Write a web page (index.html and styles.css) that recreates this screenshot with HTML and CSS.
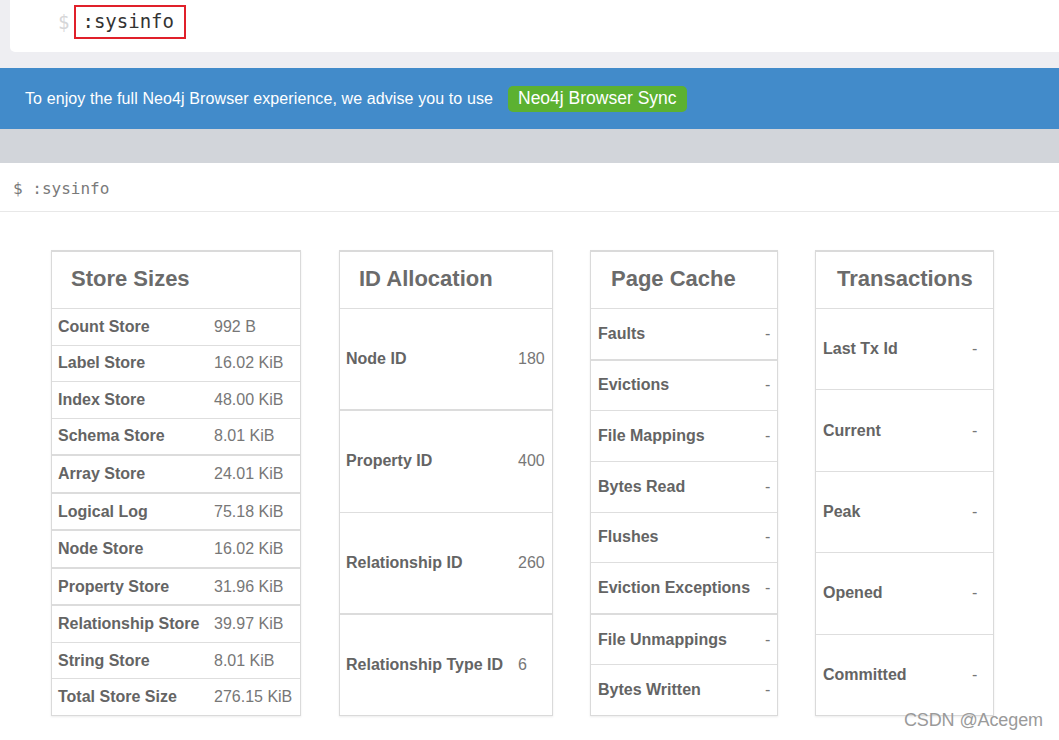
FILE: index.html
```html
<!DOCTYPE html>
<html>
<head>
<meta charset="utf-8">
<link rel="stylesheet" href="styles.css">
</head>
<body>
<div class="top">
  <div class="editor">
    <span class="dollar">$</span>
    <span class="cmd">:sysinfo</span>
  </div>
</div>
<div class="banner">
  <span class="banner-text">To enjoy the full Neo4j Browser experience, we advise you to use</span>
  <span class="sync-btn">Neo4j Browser Sync</span>
</div>
<div class="strip"></div>
<div class="frame-title">$ :sysinfo</div>
<div class="cards">
  <div class="card c1">
    <div class="card-head">Store Sizes</div>
    <div class="rows">
      <div class="row"><span class="lbl">Count Store</span><span class="val">992 B</span></div>
      <div class="row"><span class="lbl">Label Store</span><span class="val">16.02 KiB</span></div>
      <div class="row"><span class="lbl">Index Store</span><span class="val">48.00 KiB</span></div>
      <div class="row"><span class="lbl">Schema Store</span><span class="val">8.01 KiB</span></div>
      <div class="row thick"><span class="lbl">Array Store</span><span class="val">24.01 KiB</span></div>
      <div class="row thick"><span class="lbl">Logical Log</span><span class="val">75.18 KiB</span></div>
      <div class="row thick"><span class="lbl">Node Store</span><span class="val">16.02 KiB</span></div>
      <div class="row thick"><span class="lbl">Property Store</span><span class="val">31.96 KiB</span></div>
      <div class="row thick"><span class="lbl">Relationship Store</span><span class="val">39.97 KiB</span></div>
      <div class="row"><span class="lbl">String Store</span><span class="val">8.01 KiB</span></div>
      <div class="row"><span class="lbl">Total Store Size</span><span class="val">276.15 KiB</span></div>
    </div>
  </div>
  <div class="card c2">
    <div class="card-head">ID Allocation</div>
    <div class="rows">
      <div class="row"><span class="lbl">Node ID</span><span class="val">180</span></div>
      <div class="row thick"><span class="lbl">Property ID</span><span class="val">400</span></div>
      <div class="row"><span class="lbl">Relationship ID</span><span class="val">260</span></div>
      <div class="row thick"><span class="lbl">Relationship Type ID</span><span class="val">6</span></div>
    </div>
  </div>
  <div class="card c3">
    <div class="card-head">Page Cache</div>
    <div class="rows">
      <div class="row"><span class="lbl">Faults</span><span class="val">-</span></div>
      <div class="row thick"><span class="lbl">Evictions</span><span class="val">-</span></div>
      <div class="row"><span class="lbl">File Mappings</span><span class="val">-</span></div>
      <div class="row"><span class="lbl">Bytes Read</span><span class="val">-</span></div>
      <div class="row"><span class="lbl">Flushes</span><span class="val">-</span></div>
      <div class="row"><span class="lbl">Eviction Exceptions</span><span class="val">-</span></div>
      <div class="row thick"><span class="lbl">File Unmappings</span><span class="val">-</span></div>
      <div class="row"><span class="lbl">Bytes Written</span><span class="val">-</span></div>
    </div>
  </div>
  <div class="card c4">
    <div class="card-head">Transactions</div>
    <div class="rows">
      <div class="row"><span class="lbl">Last Tx Id</span><span class="val">-</span></div>
      <div class="row"><span class="lbl">Current</span><span class="val">-</span></div>
      <div class="row"><span class="lbl">Peak</span><span class="val">-</span></div>
      <div class="row"><span class="lbl">Opened</span><span class="val">-</span></div>
      <div class="row"><span class="lbl">Committed</span><span class="val">-</span></div>
    </div>
  </div>
</div>
<div class="watermark">CSDN @Acegem</div>
</body>
</html>
```
FILE: styles.css
```css
html, body {
  margin: 0;
  padding: 0;
  background: #ffffff;
  font-family: "Liberation Sans", Arial, sans-serif;
  width: 1059px;
  height: 740px;
  overflow: hidden;
  position: relative;
}

.top {
  background: #eeeef2;
  padding: 0 0 16px 10px;
}

.editor {
  background: #ffffff;
  height: 52px;
  border-bottom-left-radius: 5px;
  display: flex;
  align-items: center;
  padding-left: 48px;
  box-sizing: border-box;
  font-family: "DejaVu Sans Mono", monospace;
  font-size: 19px;
}

.dollar {
  color: #d6d6d8;
  margin-right: 5px;
  margin-top: -8px;
}

.cmd {
  color: #333333;
  border: 2px solid #e0202a;
  padding: 3px 10px 5px 6px;
  margin-top: -8px;
}

.banner {
  background: #428bca;
  height: 61px;
  display: flex;
  align-items: center;
  padding-left: 25px;
  box-sizing: border-box;
}

.banner-text {
  color: #ffffff;
  font-size: 16px;
  letter-spacing: 0.1px;
}

.sync-btn {
  margin-left: 15px;
  background: #5cb131;
  color: #ffffff;
  font-size: 17.5px;
  border-radius: 5px;
  padding: 2px 10px 3px 10px;
}

.strip {
  background: #d2d5da;
  height: 34px;
}

.frame-title {
  height: 49px;
  border-bottom: 1px solid #e8e8e8;
  box-sizing: border-box;
  display: flex;
  align-items: center;
  padding-left: 13px;
  padding-top: 2px;
  font-family: "DejaVu Sans Mono", monospace;
  font-size: 16px;
  color: #7a7a7a;
}

.cards {
  display: flex;
  gap: 37px;
  padding: 38px 0 0 51px;
}

.card {
  height: 466px;
  border: 1px solid #dadada;
  border-top-width: 2px;
  box-shadow: 0 1px 2px rgba(0, 0, 0, 0.08);
  box-sizing: border-box;
  display: flex;
  flex-direction: column;
  background: #fff;
}

.c1 { width: 250px; }
.c2 { width: 214px; margin-left: 1px; }
.c3 { width: 188px; }
.c4 { width: 179px; }

.card-head {
  height: 57px;
  flex: none;
  display: flex;
  align-items: center;
  padding-left: 19px;
  padding-bottom: 2px;
  box-sizing: border-box;
  font-size: 22px;
  font-weight: bold;
  color: #6b6b6b;
  border-bottom: 1px solid #dedede;
}

.c4 .card-head { padding-left: 21px; }
.c3 .card-head { padding-left: 20px; }

.rows {
  flex: 1;
  display: flex;
  flex-direction: column;
}

.row {
  flex: 1;
  display: flex;
  align-items: center;
  border-top: 1px solid #dedede;
  padding-left: 6px;
  font-size: 16px;
}

.c3 .row, .c4 .row { padding-left: 7px; }

.row:first-child { border-top: none; }
.row.thick { border-top: 2px solid #dcdcdc; }

.lbl {
  font-weight: bold;
  color: #646464;
  flex: none;
}

.val {
  color: #777777;
}

.c1 .lbl { width: 156px; }
.c2 .lbl { width: 172px; }
.c3 .lbl { width: 167px; }
.c4 .lbl { width: 149px; }

.watermark {
  position: absolute;
  right: 16px;
  bottom: 9px;
  font-size: 18px;
  color: #9a9a9a;
  letter-spacing: -0.1px;
}
```
